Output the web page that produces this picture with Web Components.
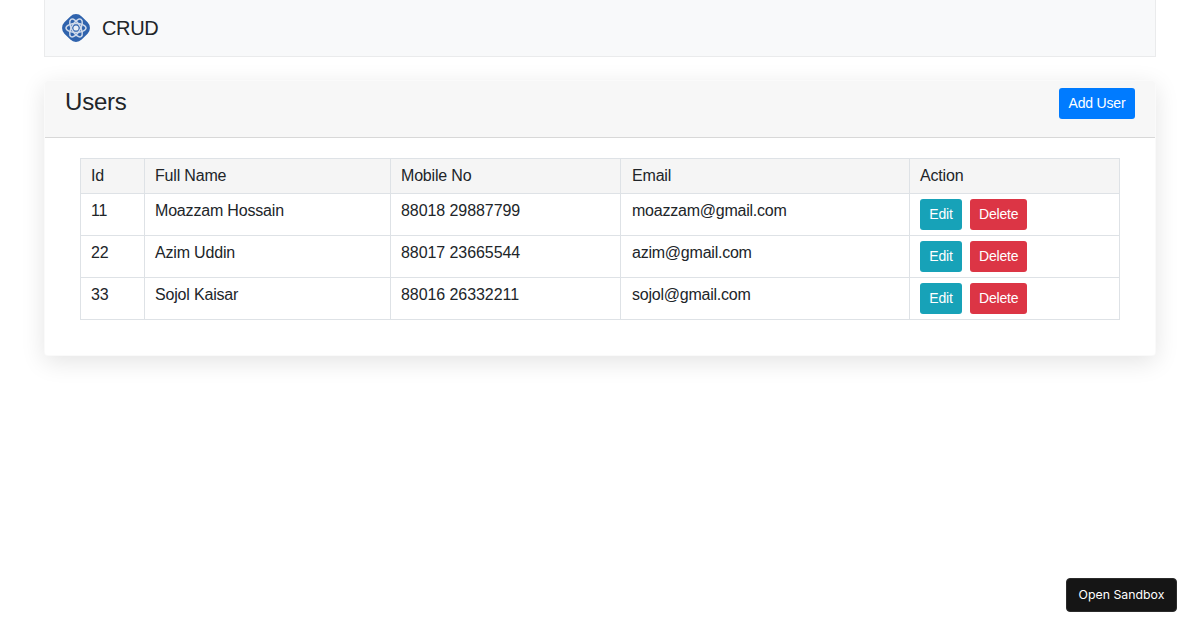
<!DOCTYPE html>
<html lang="en">
<head>
<meta charset="utf-8">
<title>CRUD</title>
<style>
	html, body { margin: 0; height: 100%; background: #fff; }
	body { font: 16px/1.5 "Liberation Sans", Arial, sans-serif; color: #212529; }
</style>
</head>
<body>
<app-shell>
	<app-navbar>CRUD</app-navbar>
	<users-card title="Users"></users-card>
</app-shell>
<sandbox-button>Open Sandbox</sandbox-button>

<script>
class AppShell extends HTMLElement {
	constructor() {
		super();
		this.attachShadow({ mode: 'open' });
		this.shadowRoot.innerHTML = `
			<style>
				:host { display: flex; flex-direction: column; gap: 23px; padding: 0 44px; }
			</style>
			<slot></slot>
		`;
	}
}

class AppNavbar extends HTMLElement {
	constructor() {
		super();
		this.attachShadow({ mode: 'open' });
		this.shadowRoot.innerHTML = `
			<style>
				:host {
					display: flex;
					align-items: center;
					gap: 11px;
					box-sizing: border-box;
					height: 57px;
					padding: 0 16px;
					background: #f8f9fa;
					border: 1px solid #eaebec;
					border-top: 0;
					font-size: 20px;
					letter-spacing: -.35px;
				}
				svg { display: block; width: 30px; height: 30px; }
			</style>
			<svg viewBox="0 0 30 30" aria-hidden="true">
				<rect x="2.800" y="2.800" width="24.400" height="24.400" rx="8" transform="rotate(45 15 15)" fill="#2f63ad"/>
				<g fill="none" stroke="#cfdaea" stroke-width="1.500">
					<ellipse cx="15" cy="15" rx="10" ry="4.400"/>
					<ellipse cx="15" cy="15" rx="10" ry="4.400" transform="rotate(60 15 15)"/>
					<ellipse cx="15" cy="15" rx="10" ry="4.400" transform="rotate(120 15 15)"/>
				</g>
				<circle cx="15" cy="15" r="2.600" fill="#e8eef6"/>
			</svg>
			<slot></slot>
		`;
	}
}

class UsersCard extends HTMLElement {
	constructor() {
		super();
		this.attachShadow({ mode: 'open' });
	}

	connectedCallback() {
		this.shadowRoot.innerHTML = `
			<style>
				:host {
					display: block;
					background: #fff;
					border: 1px solid rgba(0,0,0,.02);
					border-radius: 4px;
					box-shadow: 0 6px 24px rgba(0,0,0,.11);
				}
				header {
					display: flex;
					justify-content: space-between;
					align-items: flex-start;
					padding: 7px 20px 18px;
					background: #f7f7f7;
					border-bottom: 1px solid rgba(0,0,0,.125);
					border-radius: 3px 3px 0 0;
				}
				h3 { margin: 0; font-size: 24px; font-weight: 400; line-height: 27px; letter-spacing: -.2px; }
				header ui-button { min-width: 76px; }
				.body { padding: 20px 35px 35px; }
			</style>
			<header>
				<h3>${this.getAttribute('title')}</h3>
				<ui-button color="#007bff">Add User</ui-button>
			</header>
			<div class="body"><users-table></users-table></div>
		`;
	}
}

class UsersTable extends HTMLElement {
	constructor() {
		super();
		this.attachShadow({ mode: 'open' });
	}

	connectedCallback() {
		const users = [
			{ id: 11, name: 'Moazzam Hossain', mobile: '88018 29887799', email: 'moazzam@gmail.com' },
			{ id: 22, name: 'Azim Uddin', mobile: '88017 23665544', email: 'azim@gmail.com' },
			{ id: 33, name: 'Sojol Kaisar', mobile: '88016 26332211', email: 'sojol@gmail.com' },
		];
		const rows = users.map(u => `
			<tr>
				<td>${u.id}</td>
				<td>${u.name}</td>
				<td class="num">${u.mobile}</td>
				<td class="mail">${u.email}</td>
				<td>
					<div class="actions">
						<ui-button color="#17a2b8">Edit</ui-button>
						<ui-button color="#dc3545">Delete</ui-button>
					</div>
				</td>
			</tr>`).join('');
		this.shadowRoot.innerHTML = `
			<style>
				:host { display: block; }
				table { width: 100%; border-collapse: collapse; table-layout: fixed; letter-spacing: -.18px; }
				th, td {
					padding: 5px 10px;
					border: 1px solid #dee2e6;
					text-align: left;
					vertical-align: top;
					font-weight: 400;
				}
				th { background: #f5f5f5; }
				.num { letter-spacing: -.07px; }
				.mail { letter-spacing: -.23px; padding-left: 11px; }
				.actions { display: flex; gap: 8px; }
			</style>
			<table>
				<colgroup>
					<col style="width:64px"><col style="width:246px"><col style="width:230px"><col style="width:289px"><col>
				</colgroup>
				<thead>
					<tr><th>Id</th><th>Full Name</th><th>Mobile No</th><th style="padding-left:11px">Email</th><th>Action</th></tr>
				</thead>
				<tbody>${rows}</tbody>
			</table>
		`;
	}
}

class UiButton extends HTMLElement {
	constructor() {
		super();
		this.attachShadow({ mode: 'open' });
	}

	connectedCallback() {
		this.shadowRoot.innerHTML = `
			<style>
				:host {
					display: inline-block;
					box-sizing: border-box;
					height: 31px;
					min-width: 42px;
					padding: 4px 9px;
					border-radius: 3px;
					background: ${this.getAttribute('color')};
					color: #fff;
					font-size: 14px;
					line-height: 23px;
					letter-spacing: -.18px;
					text-align: center;
				}
			</style>
			<slot></slot>
		`;
	}
}

class SandboxButton extends HTMLElement {
	constructor() {
		super();
		this.attachShadow({ mode: 'open' });
		this.shadowRoot.innerHTML = `
			<style>
				:host {
					position: fixed;
					right: 23px;
					bottom: 18px;
					box-sizing: border-box;
					width: 111px;
					height: 34px;
					padding-bottom: 2px;
					display: flex;
					align-items: center;
					justify-content: center;
					background: #151515;
					border: 1px solid #2b2b2b;
					border-radius: 4px;
					color: #fff;
					font: 12.300px "Inter", "Liberation Sans", sans-serif;
				}
			</style>
			<slot></slot>
		`;
	}
}

customElements.define('app-shell', AppShell);
customElements.define('app-navbar', AppNavbar);
customElements.define('users-card', UsersCard);
customElements.define('users-table', UsersTable);
customElements.define('ui-button', UiButton);
customElements.define('sandbox-button', SandboxButton);
</script>
</body>
</html>
